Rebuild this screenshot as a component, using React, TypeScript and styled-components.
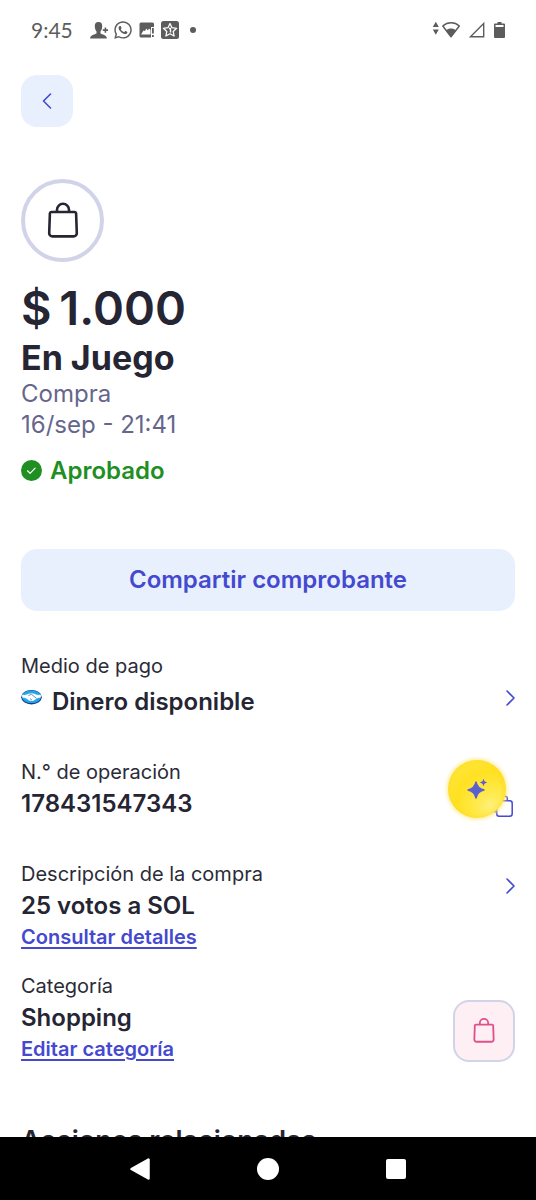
import React from "react";
import styled, { createGlobalStyle } from "styled-components";
import { FaWhatsapp } from "react-icons/fa";

const color = {
  ink: "#252533",
  label: "#2b2b38",
  muted: "#66668c",
  accent: "#4449d0",
  accentSoft: "#e8f0fe",
  green: "#1f8f24",
  ring: "#d1d4e8",
  pink: "#e0508a",
  pinkSoft: "#fdeff4",
  status: "#5c5c5c",
};

const GlobalStyle = createGlobalStyle`
  *, *::before, *::after { box-sizing: border-box; }
  body { margin: 0; background: #fff; }
  button { font: inherit; border: 0; padding: 0; margin: 0; background: none; cursor: pointer; }
  h1, h2, h3, p { margin: 0; }
  svg { display: block; flex: none; }
`;

const Shell = styled.div`
  position: relative;
  display: flex;
  flex-direction: column;
  height: 100vh;
  overflow: hidden;
  background: #fff;
  color: ${color.ink};
  font-family: Inter, "Liberation Sans", sans-serif;
`;

const StatusBar = styled.header`
  flex: none;
  display: flex;
  align-items: center;
  justify-content: space-between;
  height: 60px;
  padding: 0 31px;
  color: ${color.status};
`;

const StatusGroup = styled.div<{ $gap: number }>`
  display: flex;
  align-items: center;
  gap: ${(p) => p.$gap}px;
`;

const Clock = styled.span`
  margin-right: 12px;
  font-family: Lato, sans-serif;
  font-size: 21px;
  line-height: 26px;
`;

const MoreDot = styled.span`
  width: 6px;
  height: 6px;
  margin-left: 6px;
  border-radius: 50%;
  background: currentColor;
`;

const Content = styled.main`
  flex: 1;
  min-height: 0;
  overflow-y: auto;
  scrollbar-width: none;
  padding: 15px 21px 48px;
`;

const BackButton = styled.button`
  display: flex;
  align-items: center;
  justify-content: center;
  width: 52px;
  height: 52px;
  border-radius: 16px;
  background: ${color.accentSoft};
  color: ${color.accent};
`;

const Summary = styled.section`
  display: flex;
  flex-direction: column;
  align-items: flex-start;
  margin-top: 52px;
`;

const CategoryRing = styled.div`
  display: flex;
  align-items: center;
  justify-content: center;
  width: 83px;
  height: 83px;
  margin-bottom: 18px;
  border: 4px solid ${color.ring};
  border-radius: 50%;
`;

const Amount = styled.h1`
  font-size: 47px;
  line-height: 56px;
  font-weight: 600;
`;

const Merchant = styled.h2`
  margin-top: 2px;
  font-size: 34px;
  line-height: 40px;
  font-weight: 700;
`;

const Detail = styled.p`
  font-size: 24px;
  line-height: 31px;
  color: ${color.muted};
`;

const Status = styled.p`
  display: flex;
  align-items: center;
  gap: 8px;
  margin-top: 15px;
  font-size: 24px;
  line-height: 31px;
  font-weight: 600;
  color: ${color.green};
`;

const ShareButton = styled.button`
  width: 100%;
  height: 62px;
  margin-top: 63px;
  padding-bottom: 2px;
  border-radius: 16px;
  background: ${color.accentSoft};
  color: ${color.accent};
  font-size: 24px;
  font-weight: 600;
`;

const Rows = styled.section`
  display: flex;
  flex-direction: column;
  margin-top: 42px;
`;

const Row = styled.div<{ $space?: number }>`
  display: flex;
  align-items: flex-start;
  justify-content: space-between;
  margin-bottom: ${(p) => p.$space ?? 42}px;
`;

const Texts = styled.div<{ $gap?: number }>`
  display: flex;
  flex-direction: column;
  align-items: flex-start;
  gap: ${(p) => p.$gap ?? 3}px;
`;

const Label = styled.p`
  font-size: 20px;
  line-height: 26px;
  color: ${color.label};
`;

const Value = styled.p`
  display: flex;
  gap: 10px;
  font-size: 24px;
  line-height: 31px;
  font-weight: 600;
`;

const TextLink = styled.a`
  font-size: 20px;
  line-height: 26px;
  font-weight: 600;
  color: ${color.accent};
  text-decoration: underline;
  text-decoration-thickness: 2px;
  text-underline-offset: 3px;
`;

const RowAction = styled.button<{ $top: number }>`
  margin-top: ${(p) => p.$top}px;
  color: ${color.accent};
`;

const CategoryTile = styled.div`
  display: flex;
  align-items: center;
  justify-content: center;
  width: 62px;
  height: 62px;
  margin-top: 27px;
  border: 2px solid ${color.ring};
  border-radius: 16px;
  background: ${color.pinkSoft};
  color: ${color.pink};
`;

const SectionTitle = styled.h3`
  font-size: 27px;
  line-height: 34px;
  font-weight: 600;
`;

const Assistant = styled.button`
  position: absolute;
  right: 30px;
  bottom: 382px;
  display: flex;
  align-items: center;
  justify-content: center;
  width: 58px;
  height: 58px;
  border-radius: 50%;
  background: radial-gradient(circle at 74% 80%, #fff07c 0%, #ffea4c 22%, #ffe122 55%, #ffe94a 100%);
  box-shadow: 0 0 4px 1px #ffe98a, inset 0 0 5px #ffd91f;
`;

const NavBar = styled.nav`
  flex: none;
  display: flex;
  align-items: center;
  justify-content: center;
  gap: 104px;
  height: 63px;
  background: #000;
`;

const NavButton = styled.button`
  display: flex;
  align-items: center;
  justify-content: center;
  width: 24px;
  height: 24px;
`;

const Bag = ({ size, stroke }: { size: number; stroke: number }) => (
  <svg width={size} height={size} viewBox="0 1 40 40" fill="none" stroke="currentColor" strokeWidth={stroke} strokeLinejoin="round">
    <path d="M8.300 12h23.400a1.400 1.400 0 0 1 1.400 1.300l.7 19.700a3.200 3.200 0 0 1-3.200 3.400H9.400A3.200 3.200 0 0 1 6.200 33l.7-19.700A1.400 1.400 0 0 1 8.300 12Z" />
    <path d="M14 12V9.800a6 6 0 0 1 12 0V12" />
  </svg>
);

const Chevron = () => (
  <svg width="9" height="24" viewBox="0 0 9 24" fill="none" stroke="currentColor" strokeWidth="1.600" strokeLinecap="round" strokeLinejoin="round">
    <path d="M1 5l7 7-7 7" />
  </svg>
);

const Contact = () => (
  <svg width="18" height="20" viewBox="0 0 18 20" fill="currentColor">
    <path d="M8.500 2C5.600 2 4.600 4 4.800 6.500c.1 2 .8 4 1.700 5v2C5 14.500.5 14.800 0 18.500h17c-.5-3.700-5-4-6.500-5v-2c.9-1 1.600-3 1.700-5C12.400 4 11.400 2 8.500 2ZM14.600 7.500h1.600V9.300H18V10.900h-1.800v1.800H14.600v-1.800H12.800V9.300H14.600Z" />
  </svg>
);

const ImageAlert = () => (
  <svg width="18" height="16" viewBox="-1 0 18 16" fill="currentColor">
    <path fillRule="evenodd" d="M2 .5h11.500A1.500 1.500 0 0 1 15 2v3h-3v10.500H2A1.500 1.500 0 0 1 .5 14V2A1.500 1.500 0 0 1 2 .5ZM2 12.500h9.500V8L10 6.500 8.800 8.500 7.300 6.500 6 9 4.500 8.500Z" />
    <path d="M13 6h1.800v5.500h-1.800ZM13 13h1.800v2h-1.800Z" />
  </svg>
);

const StarBox = () => (
  <svg width="18" height="18" viewBox="0 0 18 18">
    <rect width="18" height="18" rx="2.500" fill="currentColor" />
    <path d="M9 2.500l2 4.200 4.600.6-3.400 3.100.9 4.600L9 12.800 4.900 15l.9-4.600L2.400 7.300l4.600-.6Z" fill="none" stroke="#fff" strokeWidth="1.300" strokeLinejoin="round" />
    <path d="M8 7.500h1.500v4" fill="none" stroke="#fff" strokeWidth="1.400" />
  </svg>
);

const Wifi = () => (
  <svg width="28" height="18" viewBox="0 0 28 18" fill="currentColor">
    <path d="M3.800.8L6.800 6h-6ZM.8 8.500h6l-3 5.200Z" />
    <path d="M10.800 5C15.500.8 22.700.8 27.300 5L19 15.700Z" fill="none" stroke="currentColor" strokeWidth="1.500" strokeLinejoin="round" />
    <path d="M14 9.200c3-2.400 7-2.400 10 0L19 16Z" />
  </svg>
);

const Signal = () => (
  <svg width="16" height="16" viewBox="0 0 16 16" fill="none" stroke="currentColor" strokeWidth="1.400">
    <path d="M14.700 1.500v13.300H1.400Z" />
  </svg>
);

const Battery = () => (
  <svg width="11" height="16" viewBox="0 0 11 16" fill="currentColor">
    <path fillRule="evenodd" d="M3.500 0h4v1.500H10a1 1 0 0 1 1 1V15a1 1 0 0 1-1 1H1a1 1 0 0 1-1-1V2.500a1 1 0 0 1 1-1h2.500ZM1.500 3v2h8V3Z" />
  </svg>
);

const Check = () => (
  <svg width="21" height="21" viewBox="0 0 21 21">
    <circle cx="10.500" cy="10.500" r="10.500" fill={color.green} />
    <path d="M6.500 10.800l2.600 2.500 5-5.100" fill="none" stroke="#fff" strokeWidth="1.200" strokeLinecap="round" strokeLinejoin="round" />
  </svg>
);

const Wallet = () => (
  <svg width="21" height="21" viewBox="0 -1 21 21">
    <ellipse cx="10.500" cy="10.200" rx="10.300" ry="7.200" fill="#1a3a86" />
    <ellipse cx="10.500" cy="9.800" rx="9.700" ry="6.300" fill="#1fa8ee" />
    <path d="M1.500 7.500C4 8.300 6 7.800 7.700 6.800c1.700-.9 3.800-.9 5.600 0 1.700 1 3.700 1.500 6.200.7.700 1.500.4 2.500-.3 3.200-1.900 0-2.900.3-4.200 1.300-1.300 1.200-2.600 2-4.500 2s-3.200-.8-4.500-2c-1.300-1-2.300-1.300-4.200-1.300-.7-.7-1-1.700-.3-3.200Z" fill="#fff" />
    <path d="M7.300 8.800l3-1.600 5.300 4.200M9 11.500l2 1.700" fill="none" stroke="#1a3a86" strokeWidth=".6" />
  </svg>
);

const Copy = () => (
  <svg width="24" height="24" viewBox="1 0 24 24" fill="none" stroke="currentColor" strokeWidth="1.500" strokeLinejoin="round">
    <rect x="6.700" y="6.700" width="15.500" height="15.500" rx="2.500" />
    <path d="M17.300 6.500V4.500a2.200 2.200 0 0 0-2.200-2.200H4.500a2.200 2.200 0 0 0-2.200 2.200v11a2.200 2.200 0 0 0 2.200 2.200h2" />
  </svg>
);

const Sparkles = () => (
  <svg width="20" height="22" viewBox="0 0 20 22" fill="#5b5fcf" stroke="#5b5fcf" strokeLinejoin="round">
    <path d="M9 4c1 4.900 3 6.900 8 8-5 1.100-7 3.100-8 8-1-4.900-3-6.900-8-8 5-1.100 7-3.100 8-8Z" strokeWidth="1.400" />
    <path d="M16.500 1.500c.4 1.900 1 2.500 3 3-2 .5-2.600 1.100-3 3-.4-1.900-1-2.500-3-3 2-.5 2.600-1.100 3-3Z" strokeWidth=".8" />
  </svg>
);

export default function App() {
  return (
    <Shell>
      <GlobalStyle />
      <StatusBar>
        <StatusGroup $gap={5}>
          <Clock>9:45</Clock>
          <Contact />
          <FaWhatsapp size={20} />
          <ImageAlert />
          <StarBox />
          <MoreDot />
        </StatusGroup>
        <StatusGroup $gap={9}>
          <Wifi />
          <Signal />
          <Battery />
        </StatusGroup>
      </StatusBar>

      <Content>
        <BackButton aria-label="Volver">
          <svg width="10" height="16" viewBox="0 0 10 16" fill="none" stroke="currentColor" strokeWidth="1.600" strokeLinecap="round" strokeLinejoin="round">
            <path d="M8.500 1l-7 7 7 7" />
          </svg>
        </BackButton>

        <Summary>
          <CategoryRing><Bag size={40} stroke={2.6} /></CategoryRing>
          <Amount>{"$\u20091.000"}</Amount>
          <Merchant>En Juego</Merchant>
          <Detail>Compra</Detail>
          <Detail>16/sep - 21:41</Detail>
          <Status><Check />Aprobado</Status>
        </Summary>

        <ShareButton>Compartir comprobante</ShareButton>

        <Rows>
          <Row>
            <Texts $gap={7}>
              <Label>Medio de pago</Label>
              <Value><Wallet />Dinero disponible</Value>
            </Texts>
            <RowAction $top={33} aria-label="Ver medio de pago"><Chevron /></RowAction>
          </Row>
          <Row>
            <Texts>
              <Label>N.° de operación</Label>
              <Value>178431547343</Value>
            </Texts>
            <RowAction $top={35} aria-label="Copiar número de operación"><Copy /></RowAction>
          </Row>
          <Row $space={23}>
            <Texts>
              <Label>Descripción de la compra</Label>
              <Value>25 votos a SOL</Value>
              <TextLink href="#detalles">Consultar detalles</TextLink>
            </Texts>
            <RowAction $top={13} aria-label="Ver descripción"><Chevron /></RowAction>
          </Row>
          <Row $space={62}>
            <Texts>
              <Label>Categoría</Label>
              <Value>Shopping</Value>
              <TextLink href="#categoria">Editar categoría</TextLink>
            </Texts>
            <CategoryTile><Bag size={28} stroke={2.6} /></CategoryTile>
          </Row>
        </Rows>

        <SectionTitle>Acciones relacionadas</SectionTitle>
      </Content>

      <Assistant aria-label="Asistente"><Sparkles /></Assistant>

      <NavBar>
        <NavButton aria-label="Atrás">
          <svg width="22" height="24" viewBox="0 0 22 24"><path d="M19.500 2.500v19L2.500 12Z" fill="#fff" stroke="#fff" strokeWidth="2.500" strokeLinejoin="round" /></svg>
        </NavButton>
        <NavButton aria-label="Inicio">
          <svg width="22" height="22" viewBox="0 0 22 22"><circle cx="11" cy="11" r="11" fill="#fff" /></svg>
        </NavButton>
        <NavButton aria-label="Recientes">
          <svg width="20" height="20" viewBox="0 0 20 20"><rect width="20" height="20" rx="2" fill="#fff" /></svg>
        </NavButton>
      </NavBar>
    </Shell>
  );
}
